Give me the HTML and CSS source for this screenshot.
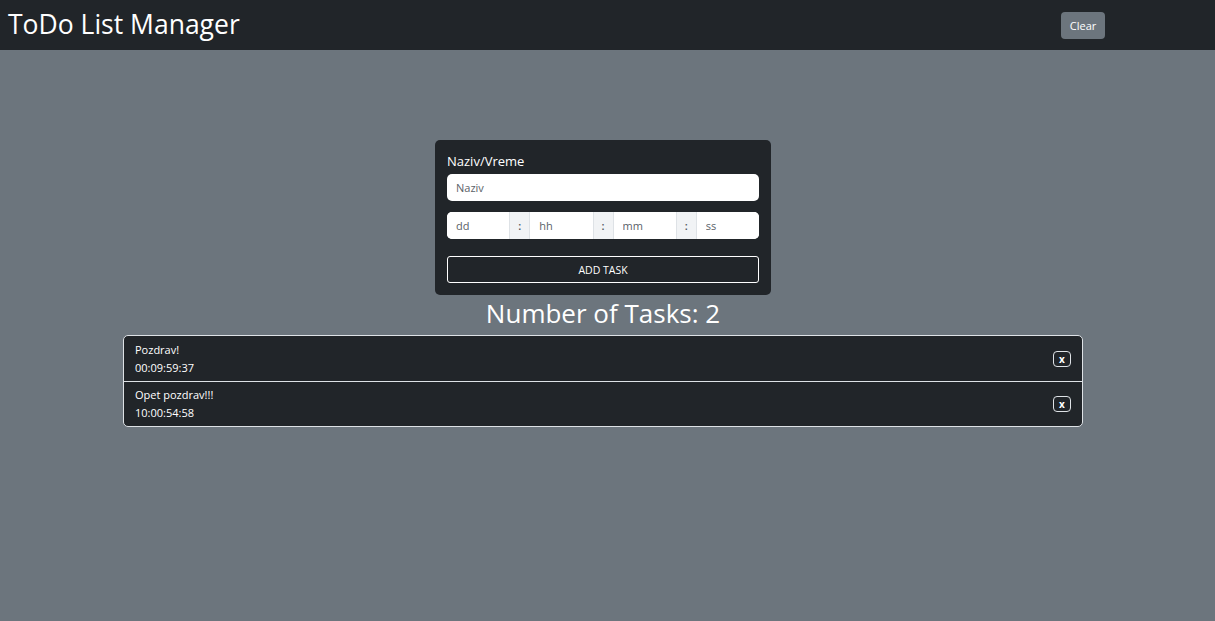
FILE: index.html
```html
<!DOCTYPE html>
<html lang="sr">
<head>
<meta charset="utf-8">
<title>ToDo List Manager</title>
<link rel="stylesheet" href="styles.css">
</head>
<body>
<header class="navbar">
  <span class="brand">ToDo List Manager</span>
  <button class="btn-clear" type="button">Clear</button>
</header>
<main class="main">
  <form class="card">
    <label class="label">Naziv/Vreme</label>
    <input class="input" type="text" placeholder="Naziv">
    <div class="time-group">
      <input class="time-input" type="text" placeholder="dd">
      <span class="sep">:</span>
      <input class="time-input" type="text" placeholder="hh">
      <span class="sep">:</span>
      <input class="time-input" type="text" placeholder="mm">
      <span class="sep">:</span>
      <input class="time-input" type="text" placeholder="ss">
    </div>
    <button class="btn-add" type="button">ADD TASK</button>
  </form>
  <h2 class="count">Number of Tasks: 2</h2>
  <ul class="list">
    <li class="item">
      <div class="item-text">
        <div>Pozdrav!</div>
        <div>00:09:59:37</div>
      </div>
      <button class="btn-x" type="button">x</button>
    </li>
    <li class="item">
      <div class="item-text">
        <div>Opet pozdrav!!!</div>
        <div>10:00:54:58</div>
      </div>
      <button class="btn-x" type="button">x</button>
    </li>
  </ul>
</main>
</body>
</html>
```
FILE: styles.css
```css
* { box-sizing: border-box; }
html, body { margin: 0; padding: 0; }
body {
  background: #6c757d;
  font-family: "Open Sans", "Noto Sans", sans-serif;
  color: #fff;
  width: 1215px;
  height: 621px;
  overflow: hidden;
}
.navbar {
  height: 50px;
  background: #212529;
  display: flex;
  align-items: center;
  padding: 0 110px 0 8px;
}
.brand {
  font-size: 26.5px;
  line-height: 1;
  flex: 1;
  margin-top: -2px;
}
.btn-clear {
  height: 27px;
  width: 44px;
  padding: 0;
  border: none;
  border-radius: 4px;
  background: #6c757d;
  color: #fff;
  font-family: inherit;
  font-size: 11px;
  margin-top: 1px;
}
.main {
  display: flex;
  flex-direction: column;
  align-items: center;
  padding: 90px 9px 0 0;
}
.card {
  width: 336px;
  height: 155px;
  background: #212529;
  border-radius: 5px;
  padding: 12px 12px 0 12px;
  display: flex;
  flex-direction: column;
  margin: 0;
}
.label {
  font-size: 13px;
  line-height: 18px;
  height: 22px;
}
.input {
  height: 27px;
  border: none;
  border-radius: 5px;
  background: #fff;
  padding: 0 9px;
  font-family: inherit;
  font-size: 11px;
}
.input::placeholder, .time-input::placeholder { color: #5a6268; }
.time-group {
  margin-top: 11px;
  height: 27px;
  display: flex;
  background: #fff;
  border-radius: 5px;
  overflow: hidden;
}
.time-input {
  width: 62px;
  flex: 1 1 62px;
  min-width: 0;
  border: none;
  padding: 0 9px;
  font-family: inherit;
  font-size: 11px;
  background: #fff;
}
.sep {
  width: 21px;
  flex: 0 0 21px;
  background: #f1f3f5;
  border-left: 1px solid #dee2e6;
  border-right: 1px solid #dee2e6;
  color: #495057;
  font-size: 11px;
  font-weight: 600;
  display: flex;
  align-items: center;
  justify-content: center;
}
.btn-add {
  margin-top: 17px;
  height: 27px;
  background: transparent;
  border: 1px solid #fff;
  border-radius: 3px;
  color: #fff;
  font-family: inherit;
  font-size: 10.5px;
  padding: 0;
}
.count {
  margin: 2px 0 6px 0;
  font-weight: 400;
  font-size: 26px;
  line-height: 32px;
}
.list {
  list-style: none;
  margin: 0;
  padding: 0;
  width: 960px;
  border: 1px solid #dee2e6;
  border-radius: 5px;
  background: #212529;
  overflow: hidden;
}
.item {
  display: flex;
  align-items: center;
  height: 45px;
  padding: 0 11px;
  font-size: 11px;
  line-height: 18px;
}
.item + .item { border-top: 1px solid #dee2e6; }
.item-text { flex: 1; }
.btn-x {
  width: 18px;
  height: 16px;
  padding: 0;
  border: 1px solid #dee2e6;
  border-radius: 4px;
  background: transparent;
  color: #fff;
  font-family: inherit;
  font-size: 10px;
  font-weight: 700;
  line-height: 12px;
}
```
